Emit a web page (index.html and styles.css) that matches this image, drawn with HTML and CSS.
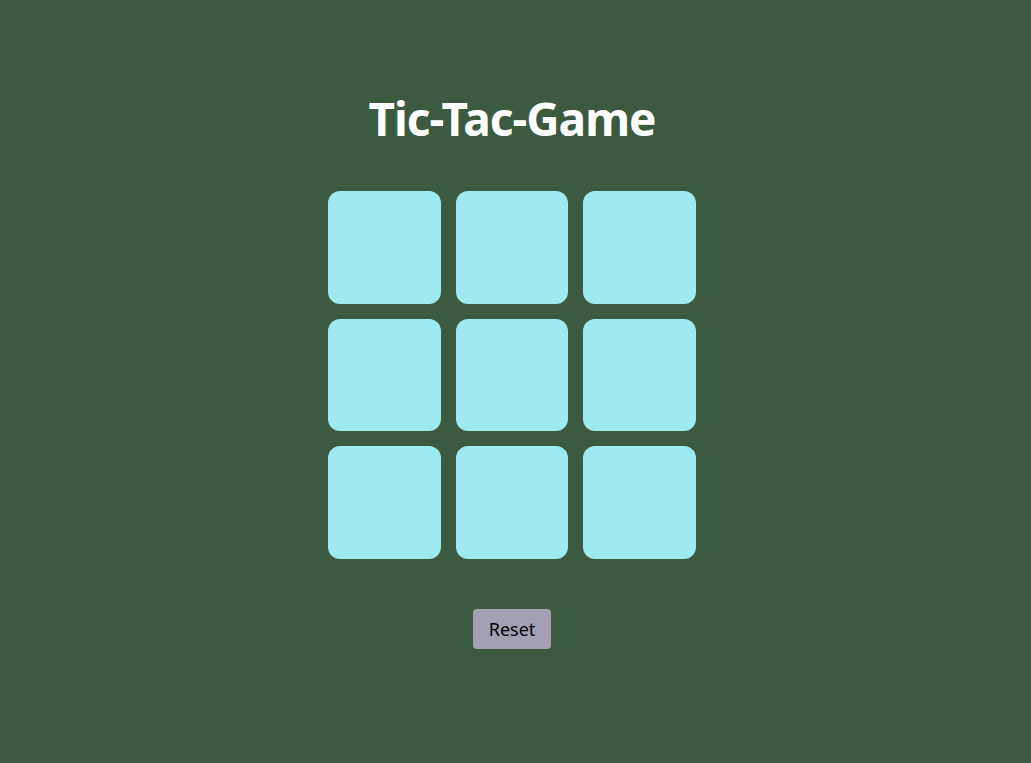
FILE: index.html
```html
<!DOCTYPE html>
<html lang="en">
<head>
<meta charset="utf-8">
<title>Tic-Tac-Game</title>
<link rel="stylesheet" href="styles.css">
</head>
<body>
<main class="app">
  <h1 class="title">Tic-Tac-Game</h1>
  <div class="board">
    <button class="box"></button>
    <button class="box"></button>
    <button class="box"></button>
    <button class="box"></button>
    <button class="box"></button>
    <button class="box"></button>
    <button class="box"></button>
    <button class="box"></button>
    <button class="box"></button>
  </div>
  <button class="reset">Reset</button>
</main>
</body>
</html>
```
FILE: styles.css
```css
html, body {
  margin: 0;
  padding: 0;
  height: 100%;
}
body {
  background: #3b5a40;
  font-family: "Noto Sans", "Open Sans", sans-serif;
}
.app {
  display: flex;
  flex-direction: column;
  align-items: center;
  padding-top: 88px;
  margin-right: 7px;
}
.title {
  margin: 0;
  font-size: 46px;
  line-height: 60px;
  font-weight: 700;
  letter-spacing: -1px;
  color: #ffffff;
}
.board {
  margin-top: 43px;
  display: grid;
  grid-template-columns: repeat(3, 112.5px);
  grid-auto-rows: 112.5px;
  gap: 15px;
}
.box {
  border: none;
  border-radius: 12px;
  background: #9deaf0;
  padding: 0;
}
.reset {
  margin-top: 50px;
  width: 78px;
  height: 40px;
  border: none;
  border-radius: 4px;
  background: #a2a0b2;
  color: #000;
  font-family: "Noto Sans", "Open Sans", sans-serif;
  font-size: 18px;
  padding: 0;
}
```
